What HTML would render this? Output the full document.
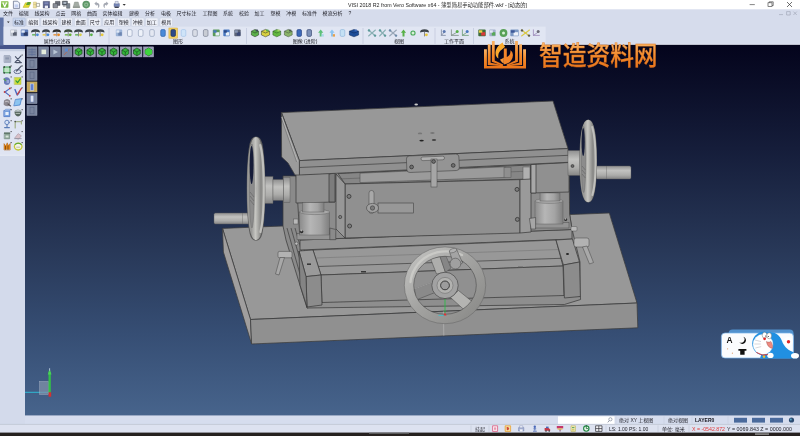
<!DOCTYPE html><html lang="zh"><head><meta charset="utf-8"><title>VISI 2018 R2</title>
<style>html,body{margin:0;padding:0;background:#d6dcec;overflow:hidden}svg{display:block}text{font-family:"Liberation Sans","Noto Sans CJK SC",sans-serif;opacity:.99}</style></head><body>
<svg width="800" height="436" viewBox="0 0 800 436">
<defs>
<linearGradient id="bg" x1="0" y1="0" x2="0" y2="1">
<stop offset="0" stop-color="#04041c"/><stop offset="0.28" stop-color="#151d3a"/><stop offset="0.555" stop-color="#283858"/><stop offset="0.78" stop-color="#364e74"/><stop offset="1" stop-color="#47648c"/></linearGradient>
<linearGradient id="cyl" x1="0" y1="0" x2="1" y2="0">
<stop offset="0" stop-color="#8c8c8c"/><stop offset="0.35" stop-color="#b6b6b6"/><stop offset="0.7" stop-color="#a4a4a4"/><stop offset="1" stop-color="#7e7e7e"/></linearGradient>
<linearGradient id="cylv" x1="0" y1="0" x2="0" y2="1">
<stop offset="0" stop-color="#909090"/><stop offset="0.35" stop-color="#c2c2c0"/><stop offset="0.7" stop-color="#adadab"/><stop offset="1" stop-color="#858585"/></linearGradient>
<linearGradient id="whl" x1="0" y1="0" x2="1" y2="0">
<stop offset="0" stop-color="#9a9a98"/><stop offset="0.45" stop-color="#c6c6c2"/><stop offset="1" stop-color="#8c8c8a"/></linearGradient>
<radialGradient id="ring" cx="0.5" cy="0.5" r="0.5">
<stop offset="0.76" stop-color="#8e8e8c"/><stop offset="0.88" stop-color="#c4c4c0"/><stop offset="1" stop-color="#90908e"/></radialGradient>
<linearGradient id="ringg" x1="0.1" y1="0.1" x2="0.9" y2="0.9">
<stop offset="0" stop-color="#bcbcba"/><stop offset="0.45" stop-color="#a4a4a2"/><stop offset="1" stop-color="#8e8e8c"/></linearGradient>
<filter id="soft" x="-5%" y="-5%" width="110%" height="110%"><feGaussianBlur stdDeviation="0.32"/></filter>
<linearGradient id="orgt" gradientUnits="userSpaceOnUse" x1="0" y1="42" x2="0" y2="68">
<stop offset="0" stop-color="#fbb868"/><stop offset="0.5" stop-color="#f48e30"/><stop offset="1" stop-color="#ea761c"/></linearGradient>
<linearGradient id="org" x1="0" y1="0" x2="0" y2="1">
<stop offset="0" stop-color="#f9b264"/><stop offset="0.5" stop-color="#f48a2a"/><stop offset="1" stop-color="#e9741a"/></linearGradient>
</defs>
<rect x="0.00" y="0.00" width="800.00" height="436.00" fill="#d6dcec" />
<rect x="0.00" y="0.00" width="800.00" height="9.30" fill="#ffffff" />
<rect x="25.00" y="44.70" width="775.00" height="371.00" fill="url(#bg)" />
<g id="model" filter="url(#soft)">
<polygon points="222.5,228.4 609.3,213.0 637.0,303.0 250.5,319.5" fill="#989898" stroke="#3c3c3c" stroke-width="0.75" stroke-linejoin="round" />
<polygon points="222.5,228.4 250.5,319.5 251.6,344.0 223.4,252.0" fill="#a09e9e" stroke="#3c3c3c" stroke-width="0.75" stroke-linejoin="round" />
<polygon points="250.5,319.5 637.0,303.0 637.8,327.8 251.6,344.0" fill="#909090" stroke="#3c3c3c" stroke-width="0.75" stroke-linejoin="round" />
<line x1="443.4" y1="311.5" x2="443.8" y2="335.6" stroke="#b4b4b4" stroke-width="0.7"/>
<polygon points="283.0,176.0 299.0,176.0 301.0,240.0 322.0,304.0 307.0,308.0 286.0,240.0 283.0,226.0" fill="#8a8a8a" stroke="#3c3c3c" stroke-width="0.75" stroke-linejoin="round" />
<line x1="287.0" y1="228.0" x2="309.0" y2="306.0" stroke="#3c3c3c" stroke-width="0.7"/>
<line x1="291.0" y1="228.0" x2="313.0" y2="305.0" stroke="#3c3c3c" stroke-width="0.7"/>
<line x1="295.0" y1="228.0" x2="317.0" y2="305.0" stroke="#3c3c3c" stroke-width="0.7"/>
<polygon points="560.0,192.0 569.0,192.0 569.6,214.0 572.0,229.0 580.0,262.0 580.0,297.0 564.0,299.0 556.0,240.0" fill="#8c8c8c" stroke="#3c3c3c" stroke-width="0.75" stroke-linejoin="round" />
<polygon points="307.0,302.0 564.0,292.0 580.4,296.5 580.6,299.5 564.4,304.5 307.0,308.0" fill="#8e8e8e" stroke="#3c3c3c" stroke-width="0.75" stroke-linejoin="round" />
<polygon points="300.0,240.0 572.0,229.5 572.0,239.0 300.0,250.0" fill="#939393" stroke="#3c3c3c" stroke-width="0.75" stroke-linejoin="round" />
<polygon points="313.0,250.0 556.0,240.0 563.0,266.0 321.0,275.0" fill="#989898" stroke="#3c3c3c" stroke-width="0.75" stroke-linejoin="round" />
<line x1="318.0" y1="266.5" x2="561.0" y2="258.3" stroke="#3c3c3c" stroke-width="0.7"/>
<line x1="316.0" y1="258.0" x2="559.0" y2="249.5" stroke="#666" stroke-width="0.4"/>
<polygon points="321.0,275.0 563.0,266.0 564.0,295.5 322.0,302.5" fill="#909090" stroke="#3c3c3c" stroke-width="0.75" stroke-linejoin="round" />
<rect x="361.00" y="271.20" width="5.00" height="1.20" fill="#222" />
<rect x="518.00" y="266.60" width="5.00" height="1.20" fill="#555" />
<polygon points="299.0,251.0 313.0,250.0 321.0,275.0 306.0,276.6" fill="#9a9a9a" stroke="#3c3c3c" stroke-width="0.75" stroke-linejoin="round" />
<polygon points="306.0,276.6 321.0,275.0 322.0,305.0 307.0,307.0" fill="#8c8c8c" stroke="#3c3c3c" stroke-width="0.75" stroke-linejoin="round" />
<polygon points="299.0,251.0 306.0,276.6 307.0,307.0 300.0,285.0" fill="#848484" stroke="#3c3c3c" stroke-width="0.75" stroke-linejoin="round" />
<rect x="307.00" y="263.50" width="4.00" height="1.30" fill="#222" />
<polygon points="556.0,240.0 572.4,239.0 579.5,262.0 563.4,265.0" fill="#9a9a9a" stroke="#3c3c3c" stroke-width="0.75" stroke-linejoin="round" />
<polygon points="563.4,265.0 579.5,262.0 580.4,296.5 564.4,298.0" fill="#8c8c8c" stroke="#3c3c3c" stroke-width="0.75" stroke-linejoin="round" />
<ellipse cx="567.5" cy="254" rx="1.5" ry="1" fill="#222"/>
<polygon points="296.0,174.0 569.0,162.0 569.6,214.0 572.0,229.5 300.0,240.0" fill="#8c8c8c" stroke="#3c3c3c" stroke-width="0.75" stroke-linejoin="round" />
<polygon points="338.0,173.5 531.0,165.0 531.0,179.0 345.0,184.0" fill="#868686" stroke="#3c3c3c" stroke-width="0.75" stroke-linejoin="round" />
<line x1="338.0" y1="179.0" x2="531.0" y2="171.0" stroke="#555" stroke-width="0.5"/>
<polygon points="360.0,173.2 505.0,166.8 505.0,177.4 360.0,182.6" fill="#9b9b9b" stroke="#444" stroke-width="0.5" stroke-linejoin="round" />
<rect x="504.00" y="167.50" width="7.00" height="10.00" fill="#8f8f8f" stroke="#555" stroke-width="0.5"/>
<rect x="523.00" y="167.00" width="7.00" height="14.00" fill="#b0b0b0" stroke="#555" stroke-width="0.5"/>
<polygon points="345.0,184.0 520.0,179.6 520.0,233.0 345.0,238.0" fill="#909090" stroke="#3c3c3c" stroke-width="0.75" stroke-linejoin="round" />
<polygon points="336.0,174.0 345.0,184.0 345.0,238.0 336.0,229.0" fill="#979797" stroke="#3c3c3c" stroke-width="0.75" stroke-linejoin="round" />
<circle cx="340.2" cy="217" r="1.6" fill="#808080" stroke="#2a2a2a" stroke-width="0.6"/>
<polygon points="520.0,179.6 531.0,179.0 531.0,232.0 520.0,233.0" fill="#9a9a9a" stroke="#3c3c3c" stroke-width="0.75" stroke-linejoin="round" />
<polygon points="296.0,174.5 335.0,173.0 335.0,202.0 296.0,203.0" fill="#909090" stroke="#3c3c3c" stroke-width="0.75" stroke-linejoin="round" />
<polygon points="329.0,174.0 335.0,173.0 335.0,202.0 329.0,202.0" fill="#7c7c7c" stroke="#3c3c3c" stroke-width="0.75" stroke-linejoin="round" />
<polygon points="531.0,164.5 569.0,162.5 569.0,192.0 531.0,193.0" fill="#909090" stroke="#3c3c3c" stroke-width="0.75" stroke-linejoin="round" />
<polygon points="531.0,164.5 536.0,164.3 536.0,193.0 531.0,193.0" fill="#a8a8a8" stroke="#3c3c3c" stroke-width="0.75" stroke-linejoin="round" />
<rect x="297.00" y="233.50" width="38.50" height="6.20" fill="#949494" stroke="#4c4c4c" stroke-width="0.5"/>
<rect x="299.80" y="212.00" width="29.80" height="23.00" fill="url(#cyl)" stroke="#555" stroke-width="0.4"/>
<ellipse cx="314.7" cy="212" rx="14.9" ry="2.6" fill="#a8a8a8" stroke="#555" stroke-width="0.4"/>
<rect x="302.50" y="202.50" width="21.50" height="9.50" fill="url(#cyl)" stroke="#555" stroke-width="0.4"/>
<rect x="293.40" y="219.00" width="4.60" height="5.00" fill="#b8b8b8" stroke="#444" stroke-width="0.4"/>
<circle cx="301.6" cy="231.6" r="1.7" fill="#2a2a2a"/>
<circle cx="301.4" cy="230.6" r="1" fill="#b0b0b0"/>
<polygon points="329.8,228.0 335.8,229.5 335.8,239.7 329.8,239.7" fill="#8a8a8a" stroke="#333" stroke-width="0.5" stroke-linejoin="round" />
<circle cx="296.4" cy="243.6" r="1.5" fill="#c0c0c0" stroke="#333" stroke-width="0.4"/>
<rect x="533.00" y="222.50" width="36.00" height="5.50" fill="#949494" stroke="#4c4c4c" stroke-width="0.5"/>
<rect x="535.00" y="201.00" width="28.00" height="23.00" fill="url(#cyl)" stroke="#555" stroke-width="0.4"/>
<ellipse cx="549" cy="201" rx="14" ry="2.4" fill="#a8a8a8" stroke="#555" stroke-width="0.4"/>
<rect x="540.00" y="193.00" width="20.00" height="8.00" fill="url(#cyl)" stroke="#555" stroke-width="0.4"/>
<polygon points="529.4,218.5 535.6,217.5 535.6,229.0 531.0,229.0" fill="#a6a6a6" stroke="#333" stroke-width="0.5" stroke-linejoin="round" />
<circle cx="565.6" cy="219.6" r="1.5" fill="#2a2a2a"/>
<circle cx="565.4" cy="218.8" r="0.9" fill="#b0b0b0"/>
<polygon points="281.6,112.6 553.0,101.0 568.0,148.6 299.4,160.6" fill="#989898" stroke="#3c3c3c" stroke-width="0.75" stroke-linejoin="round" />
<polygon points="299.4,160.6 568.0,148.6 568.6,162.3 299.4,175.0" fill="#909090" stroke="#3c3c3c" stroke-width="0.75" stroke-linejoin="round" />
<line x1="299.4" y1="167.5" x2="568.3" y2="155.3" stroke="#3c3c3c" stroke-width="0.7"/>
<polygon points="281.4,112.6 299.4,160.6 299.4,175.0 295.0,175.0 288.0,163.0 281.6,157.0" fill="#9b9b9b" stroke="#3c3c3c" stroke-width="0.75" stroke-linejoin="round" />
<line x1="281.8" y1="117.0" x2="297.6" y2="161.5" stroke="#b8b8b8" stroke-width="0.9"/>
<line x1="281.8" y1="119.5" x2="296.6" y2="162.0" stroke="#555" stroke-width="0.4"/>
<ellipse cx="420" cy="133.4" rx="2.2" ry="0.9" fill="#777"/>
<ellipse cx="432.4" cy="133" rx="2.2" ry="0.9" fill="#777"/>
<ellipse cx="421.6" cy="140.6" rx="2.2" ry="0.9" fill="#222"/>
<ellipse cx="434" cy="140" rx="2.2" ry="0.9" fill="#444"/>
<ellipse cx="416.2" cy="104.6" rx="1.8" ry="1" fill="#c8c8c8"/>
<rect x="406.6" y="155" width="52.5" height="16.5" rx="3" fill="#949494" stroke="#444" stroke-width="0.6" transform="rotate(-2.4 433 163)"/>
<rect x="421" y="156.6" width="23.5" height="3.6" rx="1.8" fill="#b0b0b0" stroke="#444" stroke-width="0.5" transform="rotate(-2.4 433 158)"/>
<rect x="431.00" y="159.00" width="6.00" height="28.00" fill="#a6a6a6" stroke="#444" stroke-width="0.5"/>
<circle cx="411.6" cy="167" r="1.9" fill="#707070" stroke="#222" stroke-width="0.6"/>
<circle cx="453.2" cy="165.4" r="1.9" fill="#707070" stroke="#222" stroke-width="0.6"/>
<circle cx="433.6" cy="161.5" r="1.9" fill="#707070" stroke="#222" stroke-width="0.6"/>
<rect x="378.00" y="203.00" width="35.60" height="10.00" fill="#989898" stroke="#444" stroke-width="0.6"/>
<rect x="369" y="190.5" width="5" height="23" rx="2.4" fill="#a8a8a8" stroke="#444" stroke-width="0.5"/>
<ellipse cx="372.5" cy="208" rx="6" ry="4.6" fill="#a0a0a0" stroke="#444" stroke-width="0.6"/>
<circle cx="372.5" cy="208" r="2.2" fill="#7a7a7a" stroke="#333" stroke-width="0.5"/>
<circle cx="349" cy="196.4" r="2" fill="#7e7e7e" stroke="#2a2a2a" stroke-width="0.7"/>
<circle cx="349.6" cy="226" r="2" fill="#7e7e7e" stroke="#2a2a2a" stroke-width="0.7"/>
<circle cx="517" cy="189.4" r="2" fill="#7e7e7e" stroke="#2a2a2a" stroke-width="0.7"/>
<circle cx="517.4" cy="219.4" r="2" fill="#7e7e7e" stroke="#2a2a2a" stroke-width="0.7"/>
<rect x="278" y="251.4" width="14" height="6.4" rx="1.5" fill="#b2b2b2" stroke="#444" stroke-width="0.5"/>
<polygon points="280.0,257.5 284.5,257.5 279.0,275.0 275.5,274.0" fill="#a8a8a8" stroke="#444" stroke-width="0.5" stroke-linejoin="round" />
<rect x="574" y="238" width="15" height="9" rx="2" fill="#b2b2b2" stroke="#444" stroke-width="0.5"/>
<polygon points="582.5,247.0 587.0,246.0 593.5,262.5 589.5,264.0" fill="#a8a8a8" stroke="#444" stroke-width="0.5" stroke-linejoin="round" />
<rect x="571" y="226.5" width="6" height="4.5" rx="1" fill="#b8b8b8" stroke="#444" stroke-width="0.4"/>
<rect x="263.00" y="176.50" width="10.00" height="27.00" fill="url(#cylv)" stroke="#555" stroke-width="0.4"/>
<rect x="273.00" y="179.50" width="10.50" height="21.00" fill="url(#cylv)" stroke="#555" stroke-width="0.4"/>
<rect x="283.50" y="177.50" width="6.50" height="25.00" fill="url(#cylv)" stroke="#555" stroke-width="0.4"/>
<rect x="214" y="213" width="39" height="11" rx="1.5" fill="url(#cylv)" stroke="#555" stroke-width="0.4"/>
<line x1="242.5" y1="213.0" x2="242.5" y2="224.0" stroke="#666" stroke-width="0.4"/>
<ellipse cx="256" cy="188.6" rx="4.5" ry="47.3" fill="#8a8a8a" stroke="#5a5a5a" stroke-width="9.6"/>
<ellipse cx="256" cy="188.6" rx="4.5" ry="47.3" fill="none" stroke="url(#whl)" stroke-width="8.8"/>
<ellipse cx="251.9" cy="186" rx="2.5" ry="42" fill="#8c8c8c" stroke="#666" stroke-width="0.4"/>
<ellipse cx="251.6" cy="165" rx="1.9" ry="19" fill="#141c38"/>
<line x1="250.0" y1="192.0" x2="254.0" y2="197.0" stroke="#5a5a5a" stroke-width="0.5"/>
<line x1="250.0" y1="196.0" x2="254.0" y2="201.0" stroke="#5a5a5a" stroke-width="0.5"/>
<line x1="250.0" y1="200.0" x2="254.0" y2="205.0" stroke="#5a5a5a" stroke-width="0.5"/>
<path d="M260.2 145 C264.8 162 265 214 260.4 232" fill="none" stroke="#d2d2ce" stroke-width="2.2" opacity="0.75" stroke-linecap="round"/>
<rect x="568.00" y="150.50" width="17.00" height="25.00" fill="url(#cylv)" stroke="#555" stroke-width="0.4"/>
<circle cx="572.5" cy="166" r="1.5" fill="#666" stroke="#222" stroke-width="0.5"/>
<rect x="596" y="166" width="35" height="13" rx="1.5" fill="url(#cylv)" stroke="#555" stroke-width="0.4"/>
<line x1="606.5" y1="166.0" x2="606.5" y2="179.0" stroke="#666" stroke-width="0.4"/>
<ellipse cx="588.2" cy="161" rx="4.2" ry="37" fill="#8a8a8a" stroke="#5a5a5a" stroke-width="9.2"/>
<ellipse cx="588.2" cy="161" rx="4.2" ry="37" fill="none" stroke="url(#whl)" stroke-width="8.4"/>
<ellipse cx="583.6" cy="159.5" rx="2.2" ry="33" fill="#8c8c8c" stroke="#666" stroke-width="0.4"/>
<ellipse cx="583.2" cy="142" rx="1.6" ry="14" fill="#141c38"/>
<line x1="582.0" y1="166.0" x2="585.4" y2="170.0" stroke="#5a5a5a" stroke-width="0.5"/>
<line x1="582.0" y1="170.0" x2="585.4" y2="174.0" stroke="#5a5a5a" stroke-width="0.5"/>
<line x1="582.0" y1="174.0" x2="585.4" y2="178.0" stroke="#5a5a5a" stroke-width="0.5"/>
<path d="M592.2 127 C596.6 142 596.8 180 592.4 195" fill="none" stroke="#d2d2ce" stroke-width="2" opacity="0.75" stroke-linecap="round"/>
<g>
<polygon points="436.5,274.0 445.5,272.5 440.0,256.5 430.5,258.5" fill="#aeaeac" stroke="#444" stroke-width="0.5" stroke-linejoin="round" />
<polygon points="445.5,272.5 440.0,256.5 446.0,256.0 451.0,268.0" fill="#868686" stroke="#444" stroke-width="0.4" stroke-linejoin="round" />
<polygon points="433.0,282.0 435.0,292.5 416.0,300.0 414.5,289.0" fill="#8a8a8a" stroke="#444" stroke-width="0.5" stroke-linejoin="round" />
<line x1="433.0" y1="282.0" x2="414.5" y2="289.0" stroke="#a6a6a6" stroke-width="0.8"/>
<polygon points="450.5,297.5 458.5,290.5 474.5,303.5 466.0,311.5" fill="#b4b4b2" stroke="#444" stroke-width="0.5" stroke-linejoin="round" />
<circle cx="445" cy="285.4" r="13.2" fill="#a2a2a2" stroke="#3a3a3a" stroke-width="0.6"/>
<circle cx="445" cy="285.4" r="8" fill="#b2b2b0" stroke="#555" stroke-width="0.4"/>
<circle cx="445" cy="285.4" r="4.4" fill="#9c9c9c" stroke="#222" stroke-width="0.8"/>
<ellipse cx="445" cy="285.3" rx="36" ry="33.7" fill="none" stroke="url(#ringg)" stroke-width="9.4"/>
<ellipse cx="445" cy="285.3" rx="40.7" ry="38.4" fill="none" stroke="#6a6a6a" stroke-width="0.6"/>
<ellipse cx="445" cy="285.3" rx="31.3" ry="29" fill="none" stroke="#4c4c4c" stroke-width="0.6"/>
<path d="M410.5 282 A35.5 33.5 0 0 1 462 255" fill="none" stroke="#d0d0cc" stroke-width="2.4" opacity="0.75" stroke-linecap="round"/>
<polygon points="449.4,251.6 456.6,249.2 462.6,263.0 455.0,267.6" fill="#a4a4a4" stroke="#444" stroke-width="0.5" stroke-linejoin="round" />
<ellipse cx="453" cy="250.6" rx="3.8" ry="2" fill="#b0b0b0" stroke="#444" stroke-width="0.4" transform="rotate(-18 453 250.6)"/>
<circle cx="455.4" cy="263.6" r="5.4" fill="#a0a0a0" stroke="#444" stroke-width="0.5"/>
</g>
<line x1="445.0" y1="299.0" x2="445.0" y2="313.0" stroke="#22c040" stroke-width="0.8"/>
<line x1="438.5" y1="315.4" x2="445.0" y2="315.4" stroke="#30c8d8" stroke-width="0.8"/>
<polygon points="443.5,315.6 446.5,315.6 445.0,312.4" fill="#e03030" stroke="none" stroke-width="0" stroke-linejoin="round" />
</g>
<line x1="25.0" y1="392.3" x2="48.4" y2="392.3" stroke="#2cc4dc" stroke-width="0.9"/>
<rect x="39.60" y="381.40" width="9.00" height="13.00" fill="#8494ac" opacity="0.7" stroke="#c4ccd8" stroke-width="0.5"/>
<rect x="48.50" y="372.00" width="2.30" height="20.60" fill="#34c048" />
<polygon points="47.8,374.6 51.5,374.6 49.6,368.6" fill="#48d058" stroke="none" stroke-width="0" stroke-linejoin="round" />
<rect x="49.20" y="368.20" width="0.90" height="2.40" fill="#b8c0e0" />
<rect x="48.60" y="392.30" width="2.60" height="4.40" fill="#d83030" />
<rect x="27.00" y="46.90" width="10.00" height="10.00" fill="#7a859f" stroke="#98a0b4" stroke-width="0.5"/>
<rect x="38.66" y="46.90" width="10.00" height="10.00" fill="#7a859f" stroke="#98a0b4" stroke-width="0.5"/>
<rect x="50.32" y="46.90" width="10.00" height="10.00" fill="#7a859f" stroke="#98a0b4" stroke-width="0.5"/>
<rect x="61.98" y="46.90" width="10.00" height="10.00" fill="#7a859f" stroke="#98a0b4" stroke-width="0.5"/>
<rect x="73.64" y="46.90" width="10.00" height="10.00" fill="#9a9eb6" stroke="#b0b4c8" stroke-width="0.5"/>
<path d="M75.2 50.0 l3.4 -2 l3.4 2 v3.8 l-3.4 2 l-3.4 -2z" fill="#34b63a" stroke="#143c18" stroke-width="0.6"/>
<path d="M75.2 50.0 l3.4 2 l3.4 -2 M78.6 52.0 v3.8" fill="none" stroke="#143c18" stroke-width="0.55"/>
<rect x="85.30" y="46.90" width="10.00" height="10.00" fill="#9a9eb6" stroke="#b0b4c8" stroke-width="0.5"/>
<path d="M86.9 50.0 l3.4 -2 l3.4 2 v3.8 l-3.4 2 l-3.4 -2z" fill="#34b63a" stroke="#143c18" stroke-width="0.6"/>
<path d="M86.9 50.0 l3.4 2 l3.4 -2 M90.3 52.0 v3.8" fill="none" stroke="#143c18" stroke-width="0.55"/>
<rect x="96.96" y="46.90" width="10.00" height="10.00" fill="#9a9eb6" stroke="#b0b4c8" stroke-width="0.5"/>
<path d="M98.6 50.0 l3.4 -2 l3.4 2 v3.8 l-3.4 2 l-3.4 -2z" fill="#34b63a" stroke="#143c18" stroke-width="0.6"/>
<path d="M98.6 50.0 l3.4 2 l3.4 -2 M102.0 52.0 v3.8" fill="none" stroke="#143c18" stroke-width="0.55"/>
<rect x="108.62" y="46.90" width="10.00" height="10.00" fill="#9a9eb6" stroke="#b0b4c8" stroke-width="0.5"/>
<path d="M110.2 50.0 l3.4 -2 l3.4 2 v3.8 l-3.4 2 l-3.4 -2z" fill="#34b63a" stroke="#143c18" stroke-width="0.6"/>
<path d="M110.2 50.0 l3.4 2 l3.4 -2 M113.6 52.0 v3.8" fill="none" stroke="#143c18" stroke-width="0.55"/>
<rect x="120.28" y="46.90" width="10.00" height="10.00" fill="#9a9eb6" stroke="#b0b4c8" stroke-width="0.5"/>
<path d="M121.9 50.0 l3.4 -2 l3.4 2 v3.8 l-3.4 2 l-3.4 -2z" fill="#34b63a" stroke="#143c18" stroke-width="0.6"/>
<path d="M121.9 50.0 l3.4 2 l3.4 -2 M125.3 52.0 v3.8" fill="none" stroke="#143c18" stroke-width="0.55"/>
<rect x="131.94" y="46.90" width="10.00" height="10.00" fill="#9a9eb6" stroke="#b0b4c8" stroke-width="0.5"/>
<path d="M133.5 50.0 l3.4 -2 l3.4 2 v3.8 l-3.4 2 l-3.4 -2z" fill="#34b63a" stroke="#143c18" stroke-width="0.6"/>
<path d="M133.5 50.0 l3.4 2 l3.4 -2 M136.9 52.0 v3.8" fill="none" stroke="#143c18" stroke-width="0.55"/>
<rect x="143.60" y="46.90" width="10.00" height="10.00" fill="#9a9eb6" stroke="#b0b4c8" stroke-width="0.5"/>
<path d="M145.2 50.0 l3.4 -2 l3.4 2 v3.8 l-3.4 2 l-3.4 -2z" fill="#34b63a" stroke="#143c18" stroke-width="0.6"/>
<path d="M145.2 50.0 l3.4 2 l3.4 -2 M148.6 52.0 v3.8" fill="none" stroke="#143c18" stroke-width="0.55"/>
<path d="M145.2 50 l3.4 -2 l3.4 2 v3.8 l-3.4 2 l-3.4 -2z" fill="#3fd43f"/>
<line x1="28.4" y1="49.6" x2="35.6" y2="49.6" stroke="#5a6a96" stroke-width="0.7"/>
<line x1="28.4" y1="52.0" x2="35.6" y2="52.0" stroke="#5a6a96" stroke-width="0.7"/>
<line x1="28.4" y1="54.4" x2="35.6" y2="54.4" stroke="#5a6a96" stroke-width="0.7"/>
<line x1="32.0" y1="48.0" x2="32.0" y2="56.0" stroke="#5a6a96" stroke-width="0.5"/>
<rect x="41.50" y="49.60" width="4.60" height="4.60" fill="#e4ecdc" />
<polygon points="53.4,49.4 58.0,52.0 53.4,54.6" fill="#b8c4d4" stroke="none" stroke-width="0" stroke-linejoin="round" />
<line x1="64.0" y1="55.0" x2="69.5" y2="49.0" stroke="#b06a58" stroke-width="0.9"/>
<rect x="65.00" y="48.60" width="3.00" height="3.00" fill="#5a8ad0" />
<rect x="27.00" y="58.70" width="10.00" height="10.00" fill="#7a859f" stroke="#98a0b4" stroke-width="0.5"/>
<rect x="30.00" y="60.50" width="4.00" height="6.60" fill="none" stroke="#5a6684" stroke-width="0.6"/>
<rect x="27.00" y="70.30" width="10.00" height="10.00" fill="#7a859f" stroke="#98a0b4" stroke-width="0.5"/>
<rect x="30.00" y="72.10" width="4.00" height="6.60" fill="none" stroke="#5a6684" stroke-width="0.6"/>
<rect x="27.00" y="81.90" width="10.00" height="10.00" fill="#c4a85c" stroke="#d8c078" stroke-width="0.5"/>
<rect x="30.20" y="83.90" width="3.60" height="6.40" fill="#5f7fd0" stroke="#dfe6ff" stroke-width="0.5"/>
<rect x="27.00" y="93.60" width="10.00" height="10.00" fill="#7a859f" stroke="#98a0b4" stroke-width="0.5"/>
<rect x="30.40" y="95.40" width="3.40" height="6.60" fill="#dfe6f4" stroke="#5f74b0" stroke-width="0.4"/>
<rect x="27.00" y="105.40" width="10.00" height="10.00" fill="#7a859f" stroke="#98a0b4" stroke-width="0.5"/>
<rect x="30.00" y="107.20" width="4.00" height="6.60" fill="none" stroke="#5a6684" stroke-width="0.6"/>
<rect x="0.00" y="45.00" width="25.00" height="4.00" fill="#45548a" />
<rect x="0.00" y="49.00" width="25.00" height="375.40" fill="#d3daeb" />
<rect x="0.00" y="49.00" width="25.00" height="106.30" fill="#dfe4f2" />
<rect x="0.00" y="49.00" width="25.00" height="2.20" fill="#c8d0e2" />
<line x1="0.0" y1="155.3" x2="25.0" y2="155.3" stroke="#f2f4fa" stroke-width="0.6"/>
<rect x="0.00" y="17.50" width="3.60" height="28.00" fill="#6074a6" />
<g id="lefticons" stroke-linecap="round" stroke-linejoin="round">
<path d="M4.4 55.6 h5.4 l1 1.2 v5.6 h-6.4z" fill="#aab2c4" stroke="#8690a8" stroke-width="0.5" />
<path d="M5.4 57.4 h3.6 v2 h-3.6z" fill="#8c96ae" stroke="none" stroke-width="0.8" />
<path d="M15 62.4 l6 -6.6 M15.4 56.6 l5 5.6 M16 62.6 h5.4" fill="none" stroke="#4c546a" stroke-width="1.1" />
<path d="M4.2 67 h5.8 v5.8 h-5.8z" fill="#bfe3c4" stroke="#3f9e52" stroke-width="1" />
<circle cx="4.2" cy="67" r="0.9" fill="#3a4a40"/>
<circle cx="10" cy="67" r="0.9" fill="#3a4a40"/>
<circle cx="4.2" cy="72.8" r="0.9" fill="#3a4a40"/>
<circle cx="10" cy="72.8" r="0.9" fill="#3a4a40"/>
<ellipse cx="17.6" cy="71.6" rx="3.6" ry="2" fill="none" stroke="#5a6488" stroke-width="0.9"/>
<path d="M16.6 71 l4.6 -4.8" fill="none" stroke="#4c546a" stroke-width="1.2" />
<path d="M4 78.2 q3 -2 5.6 0.6 q1.6 3 -0.6 5.6 q-3.2 1.4 -5 -1.2z" fill="#6a7cb8" stroke="none" stroke-width="0.8" />
<path d="M3.8 79 l2 1.6" fill="none" stroke="#58a848" stroke-width="1.1" />
<path d="M6.6 80 h2.4 v3 h-2.4z" fill="#9aa8d8" stroke="none" stroke-width="0.8" />
<path d="M14.6 77.6 h6.4 v6.8 h-6.4z" fill="#cfdc3c" stroke="#a8b830" stroke-width="0.5" />
<path d="M16 80.8 l1.6 1.8 l2.6 -3.6" fill="none" stroke="#2f9a3c" stroke-width="1.2" />
<path d="M9.6 88.6 l-4.6 3.4 l4.6 3.6" fill="none" stroke="#4a68c0" stroke-width="1.1" />
<circle cx="9.8" cy="88.4" r="0.9" fill="#c84040"/>
<circle cx="4.6" cy="92" r="0.9" fill="#c84040"/>
<circle cx="9.8" cy="95.8" r="0.9" fill="#c84040"/>
<path d="M15 89.6 l2.2 5.4 l2.2 -3" fill="none" stroke="#4a68c0" stroke-width="1.4" />
<path d="M17.4 94.4 l4 -6" fill="none" stroke="#c84848" stroke-width="1.3" />
<path d="M4 100.4 q3.4 -3 6 0 q1 3.4 -1.4 5.6 q-3.6 0.6 -5 -1.6z" fill="#8c8890" stroke="none" stroke-width="0.8" />
<path d="M5.4 101.6 q2 -1 3.4 0.4" fill="none" stroke="#c8c4c8" stroke-width="0.9" />
<path d="M8 104 l2.6 2" fill="none" stroke="#5a5458" stroke-width="1.1" />
<path d="M15.8 99.4 l5.8 -0.8 l-1.6 6.4 l-5.8 0.8z" fill="#8cc4f0" stroke="#3a78c8" stroke-width="0.7" />
<path d="M4.2 110.6 h5.6 v6 h-5.6z" fill="#7aa4e0" stroke="#3f6cc0" stroke-width="0.7" />
<path d="M5.4 112 h3.2 v3 h-3.2z" fill="#e8f0fc" stroke="none" stroke-width="0.8" />
<path d="M4.2 110.6 l1.4 -1.4 h5.4 l-1.2 1.4" fill="#a8c4ec" stroke="#3f6cc0" stroke-width="0.4" />
<path d="M14.4 111.6 h7.2 q-0.4 4.6 -3.6 5 q-3.2 -0.4 -3.6 -5z" fill="#56665e" stroke="none" stroke-width="0.8" />
<path d="M15.4 110.6 q2.6 -1.6 5.2 0" fill="none" stroke="#9aa8a0" stroke-width="0.9" />
<path d="M16 113.4 h3.6" fill="none" stroke="#c8d4cc" stroke-width="0.8" />
<circle cx="7" cy="122.4" r="2.2" fill="#d8e4f8" stroke="#5a7cb8" stroke-width="0.9"/>
<path d="M7 124.6 v2.6 M4.6 127.6 h4.8" fill="none" stroke="#5a7cb8" stroke-width="1.1" />
<path d="M15.2 128 v-6.4 h6.2 v2.4" fill="none" stroke="#a2b088" stroke-width="1.2" />
<circle cx="15.2" cy="121.6" r="0.8" fill="#4a4a4a"/>
<path d="M4.6 133.4 h5 v5.4 h-5z" fill="#8aa494" stroke="#5c7466" stroke-width="0.5" />
<path d="M4 132.4 h6.2 v1.6 h-6.2z" fill="#62786c" stroke="none" stroke-width="0.8" />
<path d="M5.6 135.4 h3 v2.2 h-3z" fill="#d8e4dc" stroke="none" stroke-width="0.8" />
<path d="M15 137.6 l3.2 -4 l3.2 2.2 l-2.6 3.2z" fill="#d8c0c8" stroke="#a08c98" stroke-width="0.5" />
<path d="M14.6 138.6 h6.6" fill="none" stroke="#8a8a98" stroke-width="0.8" />
<path d="M4 149.6 v-6 l1.8 2.4 l1.4 -3.2 l1.4 3 l1.6 -2.4 v6.2z" fill="#e88c1c" stroke="#a85c10" stroke-width="0.5" />
<path d="M5.6 146.4 v3 M8 146 v3.4" fill="none" stroke="#6a3808" stroke-width="0.8" />
<ellipse cx="18.2" cy="146.6" rx="3.8" ry="3.4" fill="#f4f4e4" stroke="#c4c838" stroke-width="1.3"/>
<path d="M15.2 144.4 q3 -2.4 6 0" fill="none" stroke="#58a838" stroke-width="1.1" />
<path d="M16.6 147.2 h3.2" fill="none" stroke="#b0b0a0" stroke-width="0.8" />
<rect x="21.6" y="54.6" width="1.1" height="0.9" fill="#222"/>
<rect x="10.6" y="65.5" width="1.1" height="0.9" fill="#222"/>
<rect x="21.6" y="65.5" width="1.1" height="0.9" fill="#222"/>
<rect x="10.6" y="76.5" width="1.1" height="0.9" fill="#222"/>
<rect x="21.6" y="76.5" width="1.1" height="0.9" fill="#222"/>
<rect x="10.6" y="87.4" width="1.1" height="0.9" fill="#222"/>
<rect x="21.6" y="87.4" width="1.1" height="0.9" fill="#222"/>
<rect x="10.6" y="98.4" width="1.1" height="0.9" fill="#222"/>
<rect x="21.6" y="98.4" width="1.1" height="0.9" fill="#222"/>
<rect x="10.6" y="109.3" width="1.1" height="0.9" fill="#222"/>
<rect x="21.6" y="109.3" width="1.1" height="0.9" fill="#222"/>
<rect x="10.6" y="120.3" width="1.1" height="0.9" fill="#222"/>
<rect x="21.6" y="120.3" width="1.1" height="0.9" fill="#222"/>
<rect x="10.6" y="131.2" width="1.1" height="0.9" fill="#222"/>
<rect x="21.6" y="131.2" width="1.1" height="0.9" fill="#222"/>
<rect x="10.6" y="142.2" width="1.1" height="0.9" fill="#222"/>
<rect x="21.6" y="142.2" width="1.1" height="0.9" fill="#222"/>
</g>
<g id="qat" stroke-linejoin="round">
<rect x="1" y="1.2" width="7.4" height="6.6" rx="0.8" fill="#7cb848"/>
<rect x="1" y="1.2" width="7.4" height="2.6" rx="0.8" fill="#a6d276" opacity="0.8"/>
<path d="M2.8 2.4 L4.7 6.8 L6.6 2.4" fill="none" stroke="#ffffff" stroke-width="1.2" />
<path d="M13.4 1.2 h4.2 l2 2 v5.2 h-6.2z" fill="#eef2fc" stroke="#5c6684" stroke-width="0.7" />
<path d="M14.6 4.4 h3.6 v3 h-3.6z" fill="#c4d0f0" stroke="none" stroke-width="0.8" />
<path d="M23 7.4 l2.4 -4.6 h5.6 l-2.4 4.6z" fill="#e4dc34" stroke="#a8a020" stroke-width="0.4" />
<path d="M26 5 l1.6 -3 h3.4 l-1.6 3z" fill="#5ea232" stroke="none" stroke-width="0.8" />
<path d="M33.4 2 h3 v6 h-3z" fill="#f0e2a4" stroke="#c8b468" stroke-width="0.4" />
<path d="M36.4 3.4 h3.2 v3 h-3.2z" fill="#fbfbf4" stroke="#6c6c5c" stroke-width="0.5" />
<path d="M33.4 4.4 h3" fill="none" stroke="#c8b468" stroke-width="0.5" />
<path d="M43.2 1.4 h6.4 v6.6 h-6.4z" fill="#545c88" stroke="#3c4468" stroke-width="0.4" />
<path d="M44.4 2.2 h4 v2.2 h-4z" fill="#7c86b4" stroke="none" stroke-width="0.8" />
<path d="M44.8 5.6 h3.2 v2.4 h-3.2z" fill="#eef0f8" stroke="none" stroke-width="0.8" />
<path d="M55.4 1.4 h4.6 v4 h-4.6z" fill="#6a6e78" stroke="#44464e" stroke-width="0.5" />
<path d="M53 3.6 h4.6 v4.2 h-4.6z" fill="#8a8e98" stroke="#44464e" stroke-width="0.5" />
<path d="M62.4 1.2 h5 v3.8 h-5z" fill="#5a626c" stroke="#3c424a" stroke-width="0.5" />
<path d="M63.4 2 h3 v2 h-3z" fill="#aab4c0" stroke="none" stroke-width="0.8" />
<path d="M66.6 3.6 h3.2 v4.6 h-3.2z" fill="#7c8690" stroke="#4a5058" stroke-width="0.5" />
<path d="M63 6 h2.6" fill="none" stroke="#4a5058" stroke-width="0.8" />
<path d="M74.6 2 h3.6 l1.6 5.6 h-6.8z" fill="#a4aca4" stroke="#848c84" stroke-width="0.4" />
<path d="M73 6.6 h6.8 v1.2 h-6.8z" fill="#8a928a" stroke="none" stroke-width="0.8" />
<circle cx="86.2" cy="4.6" r="3.8" fill="#5e9668"/>
<circle cx="86.2" cy="4.6" r="2.2" fill="#8ab890"/>
<circle cx="86.2" cy="4.6" r="0.9" fill="#5e9668"/>
<path d="M94.4 3.4 l2.2 -2 v1.4 q3.2 0.2 2.8 3.4 q-0.4 1.6 -1.6 1.8 q1 -3 -1.2 -3.2 v1.2z" fill="#a4a8b2" stroke="none" stroke-width="0.8" />
<path d="M108.4 3.4 l-2.2 -2 v1.4 q-3.2 0.2 -2.8 3.4 q0.4 1.6 1.6 1.8 q-1 -3 1.2 -3.2 v1.2z" fill="#a4a8b2" stroke="none" stroke-width="0.8" />
<path d="M114 3.6 h5.4 v3 h-5.4z" fill="#7686b8" stroke="#4c5884" stroke-width="0.4" />
<path d="M115.2 1.4 h3 v2.4 h-3z" fill="#dfe4f2" stroke="#6c7698" stroke-width="0.4" />
<path d="M114.6 6.6 h4.2 v1.4 h-4.2z" fill="#3c4254" stroke="none" stroke-width="0.8" />
</g>
<polygon points="122.6,4.0 125.8,4.0 124.2,5.8" fill="#333" stroke="none" stroke-width="0" stroke-linejoin="round" />
<text x="348.0" y="7.0" font-size="5.3" fill="#222" >VISI 2018 R2 from Vero Software x64 - 薄型简易手动功能部件.wkf - [动态的]</text>
<line x1="749.6" y1="4.6" x2="754.8" y2="4.6" stroke="#333" stroke-width="0.6"/>
<rect x="768.00" y="2.80" width="4.00" height="3.80" fill="none" stroke="#333" stroke-width="0.6"/>
<path d="M769.2 2.8 v-1 h4 v3.8 h-1.2" fill="none" stroke="#333" stroke-width="0.6"/>
<path d="M787 2 l5 5 M792 2 l-5 5" stroke="#333" stroke-width="0.7"/>
<path d="M779 14.6 h4 M786.6 11.6 h3.6 v3.4 h-3.6z M793.4 11.6 l3.4 3.4 M796.8 11.6 l-3.4 3.4" fill="none" stroke="#9aa0b0" stroke-width="0.6"/>
<text x="3.0" y="15.4" font-size="5" fill="#1c1c24" >文件</text>
<text x="18.8" y="15.4" font-size="5" fill="#1c1c24" >编辑</text>
<text x="34.6" y="15.4" font-size="5" fill="#1c1c24" >线架构</text>
<text x="55.6" y="15.4" font-size="5" fill="#1c1c24" >点云</text>
<text x="71.2" y="15.4" font-size="5" fill="#1c1c24" >网格</text>
<text x="87.0" y="15.4" font-size="5" fill="#1c1c24" >曲面</text>
<text x="102.6" y="15.4" font-size="5" fill="#1c1c24" >实体编辑</text>
<text x="129.0" y="15.4" font-size="5" fill="#1c1c24" >建模</text>
<text x="145.0" y="15.4" font-size="5" fill="#1c1c24" >分析</text>
<text x="161.0" y="15.4" font-size="5" fill="#1c1c24" >电极</text>
<text x="176.4" y="15.4" font-size="5" fill="#1c1c24" >尺寸标注</text>
<text x="202.5" y="15.4" font-size="5" fill="#1c1c24" >工程图</text>
<text x="223.0" y="15.4" font-size="5" fill="#1c1c24" >系统</text>
<text x="239.0" y="15.4" font-size="5" fill="#1c1c24" >校验</text>
<text x="254.6" y="15.4" font-size="5" fill="#1c1c24" >加工</text>
<text x="270.5" y="15.4" font-size="5" fill="#1c1c24" >塑模</text>
<text x="286.2" y="15.4" font-size="5" fill="#1c1c24" >冲模</text>
<text x="302.0" y="15.4" font-size="5" fill="#1c1c24" >标准件</text>
<text x="322.6" y="15.4" font-size="5" fill="#1c1c24" >模流分析</text>
<text x="348.6" y="15.4" font-size="5" fill="#1c1c24" >?</text>
<rect x="3.60" y="26.60" width="542.00" height="17.80" fill="#e1e6f3" />
<polygon points="7.0,21.4 9.6,21.4 8.3,23.0" fill="#222" stroke="none" stroke-width="0" stroke-linejoin="round" />
<rect x="13" y="18" width="12.2" height="8.2" rx="0.8" fill="#c9d6ee" stroke="#9aa6c4" stroke-width="0.4"/>
<text x="19.1" y="24.3" font-size="5" fill="#1c1c24" text-anchor="middle">标准</text>
<rect x="27" y="18" width="12.5" height="8.2" rx="0.8" fill="#eef1f9" stroke="#c2c9dc" stroke-width="0.4"/>
<text x="33.2" y="24.3" font-size="5" fill="#1c1c24" text-anchor="middle">编辑</text>
<rect x="41" y="18" width="17.700000000000003" height="8.2" rx="0.8" fill="#eef1f9" stroke="#c2c9dc" stroke-width="0.4"/>
<text x="49.9" y="24.3" font-size="5" fill="#1c1c24" text-anchor="middle">线架构</text>
<rect x="60.7" y="18" width="11.799999999999997" height="8.2" rx="0.8" fill="#eef1f9" stroke="#c2c9dc" stroke-width="0.4"/>
<text x="66.6" y="24.3" font-size="5" fill="#1c1c24" text-anchor="middle">建模</text>
<rect x="74.5" y="18" width="12.5" height="8.2" rx="0.8" fill="#eef1f9" stroke="#c2c9dc" stroke-width="0.4"/>
<text x="80.8" y="24.3" font-size="5" fill="#1c1c24" text-anchor="middle">曲面</text>
<rect x="88.7" y="18" width="12.299999999999997" height="8.2" rx="0.8" fill="#eef1f9" stroke="#c2c9dc" stroke-width="0.4"/>
<text x="94.8" y="24.3" font-size="5" fill="#1c1c24" text-anchor="middle">尺寸</text>
<rect x="103" y="18" width="12.5" height="8.2" rx="0.8" fill="#eef1f9" stroke="#c2c9dc" stroke-width="0.4"/>
<text x="109.2" y="24.3" font-size="5" fill="#1c1c24" text-anchor="middle">应用</text>
<rect x="117.5" y="18" width="12.5" height="8.2" rx="0.8" fill="#eef1f9" stroke="#c2c9dc" stroke-width="0.4"/>
<text x="123.8" y="24.3" font-size="5" fill="#1c1c24" text-anchor="middle">塑模</text>
<rect x="131.7" y="18" width="12.300000000000011" height="8.2" rx="0.8" fill="#eef1f9" stroke="#c2c9dc" stroke-width="0.4"/>
<text x="137.8" y="24.3" font-size="5" fill="#1c1c24" text-anchor="middle">冲模</text>
<rect x="145.7" y="18" width="12.300000000000011" height="8.2" rx="0.8" fill="#eef1f9" stroke="#c2c9dc" stroke-width="0.4"/>
<text x="151.8" y="24.3" font-size="5" fill="#1c1c24" text-anchor="middle">加工</text>
<rect x="160" y="18" width="12.5" height="8.2" rx="0.8" fill="#eef1f9" stroke="#c2c9dc" stroke-width="0.4"/>
<text x="166.2" y="24.3" font-size="5" fill="#1c1c24" text-anchor="middle">模具</text>
<rect x="10.3" y="29.6" width="6.8" height="6.6" rx="0.8" fill="#b8bec9"/>
<rect x="13.0" y="32.2" width="3.7" height="3.4" fill="#5a6070"/>
<rect x="10.9" y="30.3" width="3.1" height="2.4" fill="#eef0f6"/>
<rect x="20.8" y="29.6" width="7.4" height="6.6" rx="0.8" fill="#5a78b4"/>
<rect x="23.7" y="32.2" width="4.0" height="3.4" fill="#2c3c68"/>
<rect x="21.4" y="30.3" width="3.4" height="2.4" fill="#dfe8f8"/>
<path d="M31.0 32.4 a4.5 3.2 0 0 1 9.0 0 q-4.5 -1.2 -9.0 0z" fill="#3c444c"/>
<line x1="35.5" y1="31.6" x2="35.5" y2="36.4" stroke="#4a4a4a" stroke-width="0.6"/>
<circle cx="37.4" cy="34.8" r="1.4" fill="#4a8ad8"/>
<rect x="32.1" y="34.2" width="3" height="1.3" fill="#58b048"/>
<path d="M42.0 32.4 a4.0 3.2 0 0 1 8.0 0 q-4.0 -1.2 -8.0 0z" fill="#3c444c"/>
<line x1="46.0" y1="31.6" x2="46.0" y2="36.4" stroke="#4a4a4a" stroke-width="0.6"/>
<circle cx="47.9" cy="34.8" r="1.4" fill="#4a8ad8"/>
<rect x="42.6" y="34.2" width="3" height="1.3" fill="#e8c838"/>
<path d="M52.5 32.4 a4.2 3.2 0 0 1 8.5 0 q-4.2 -1.2 -8.5 0z" fill="#2e2e2e"/>
<line x1="56.8" y1="31.6" x2="56.8" y2="36.4" stroke="#4a4a4a" stroke-width="0.6"/>
<circle cx="58.6" cy="34.8" r="1.4" fill="#e88a28"/>
<rect x="53.4" y="34.2" width="3" height="1.3" fill="#e88a28"/>
<path d="M64.0 32.4 a4.2 3.2 0 0 1 8.5 0 q-4.2 -1.2 -8.5 0z" fill="#3c4c3c"/>
<line x1="68.2" y1="31.6" x2="68.2" y2="36.4" stroke="#4a4a4a" stroke-width="0.6"/>
<circle cx="70.2" cy="34.8" r="1.4" fill="#68b038"/>
<rect x="64.8" y="34.2" width="3" height="1.3" fill="#68b038"/>
<path d="M74.0 32.4 a4.5 3.2 0 0 1 9.0 0 q-4.5 -1.2 -9.0 0z" fill="#3c444c"/>
<line x1="78.5" y1="31.6" x2="78.5" y2="36.4" stroke="#4a4a4a" stroke-width="0.6"/>
<circle cx="80.4" cy="34.8" r="1.4" fill="#d8d048"/>
<rect x="75.1" y="34.2" width="3" height="1.3" fill="#58b048"/>
<path d="M85.0 32.4 a4.5 3.2 0 0 1 9.0 0 q-4.5 -1.2 -9.0 0z" fill="#3c444c"/>
<line x1="89.5" y1="31.6" x2="89.5" y2="36.4" stroke="#4a4a4a" stroke-width="0.6"/>
<circle cx="91.4" cy="34.8" r="1.4" fill="#58b048"/>
<path d="M96.0 32.4 a4.2 3.2 0 0 1 8.5 0 q-4.2 -1.2 -8.5 0z" fill="#3c444c"/>
<line x1="100.2" y1="31.6" x2="100.2" y2="36.4" stroke="#4a4a4a" stroke-width="0.6"/>
<circle cx="102.2" cy="34.8" r="1.4" fill="#e8c838"/>
<text x="57.0" y="43.4" font-size="5" fill="#1c1c24" text-anchor="middle">属性/过滤器</text>
<rect x="115.8" y="29.6" width="6.4" height="6.6" rx="0.8" fill="#9cb4d8"/>
<rect x="118.3" y="32.2" width="3.5" height="3.4" fill="#6d86b0"/>
<rect x="116.4" y="30.3" width="2.9" height="2.4" fill="#dfe8f6"/>
<rect x="127.5" y="29.6" width="4.6" height="6.8" rx="1.3" fill="#eef2fa" stroke="#8a98b4" stroke-width="0.6"/>
<rect x="138.4" y="29.6" width="4.6" height="6.8" rx="1.3" fill="#eef2fa" stroke="#8a98b4" stroke-width="0.6"/>
<rect x="149.7" y="29.6" width="4.6" height="6.8" rx="1.3" fill="#e4e8f2" stroke="#8a98b4" stroke-width="0.6"/>
<rect x="160.7" y="29.6" width="4.6" height="6.8" rx="1.3" fill="#4a8ad8" stroke="#2c5aa0" stroke-width="0.6"/>
<rect x="168.90" y="28.00" width="8.70" height="10.20" fill="#f2d264" stroke="#d8a838" stroke-width="0.5"/>
<rect x="170.9" y="29.6" width="4.6" height="6.8" rx="1.3" fill="#2c4a88" stroke="#1c2c58" stroke-width="0.6"/>
<rect x="181.2" y="29.6" width="4.6" height="6.8" rx="1.3" fill="#cfe4f8" stroke="#9cc0e8" stroke-width="0.6"/>
<rect x="192.7" y="29.6" width="4.6" height="6.8" rx="1.3" fill="#d8dce6" stroke="#7c8498" stroke-width="0.6"/>
<rect x="203.4" y="29.6" width="4.6" height="6.8" rx="1.3" fill="#c8ccd4" stroke="#6c7488" stroke-width="0.6"/>
<rect x="212.8" y="29.6" width="6.9" height="6.6" rx="0.8" fill="#5a9a5a"/>
<rect x="215.5" y="32.2" width="3.8" height="3.4" fill="#e8f0f8"/>
<rect x="213.4" y="30.3" width="3.1" height="2.4" fill="#4a78c0"/>
<rect x="223.3" y="29.6" width="6.4" height="6.6" rx="0.8" fill="#4a78c0"/>
<rect x="225.8" y="32.2" width="3.5" height="3.4" fill="#e8f0f8"/>
<rect x="223.9" y="30.3" width="2.9" height="2.4" fill="#2c4a88"/>
<rect x="234.3" y="29.6" width="6.4" height="6.6" rx="0.8" fill="#5c6478"/>
<rect x="236.8" y="32.2" width="3.5" height="3.4" fill="#3c4a78"/>
<rect x="234.9" y="30.3" width="2.9" height="2.4" fill="#8a98b4"/>
<text x="178.0" y="43.4" font-size="5" fill="#1c1c24" text-anchor="middle">图形</text>
<path d="M251.4 31.2 l3.6 -1.8 l3.6 1.8 v3.8 l-3.6 1.8 l-3.6 -1.8z" fill="#5ab04a" stroke="#243424" stroke-width="0.5"/>
<path d="M251.4 31.2 l3.6 1.8 l3.6 -1.8" fill="none" stroke="#243424" stroke-width="0.5"/>
<rect x="255.6" y="29.6" width="2.4" height="1.8" fill="#3c4c58"/>
<path d="M261.4 31.2 l4.1 -1.8 l4.1 1.8 v3.8 l-4.1 1.8 l-4.1 -1.8z" fill="#d8d040" stroke="#242c24" stroke-width="0.5"/>
<path d="M261.4 31.2 l4.1 1.8 l4.1 -1.8" fill="none" stroke="#242c24" stroke-width="0.5"/>
<rect x="266.1" y="29.6" width="2.4" height="1.8" fill="#58b048"/>
<path d="M272.9 31.2 l3.9 -1.8 l3.9 1.8 v3.8 l-3.9 1.8 l-3.9 -1.8z" fill="#62b840" stroke="#2c5424" stroke-width="0.5"/>
<path d="M272.9 31.2 l3.9 1.8 l3.9 -1.8" fill="none" stroke="#2c5424" stroke-width="0.5"/>
<rect x="277.4" y="29.6" width="2.4" height="1.8" fill="#a8d868"/>
<path d="M284.4 31.2 l3.9 -1.8 l3.9 1.8 v3.8 l-3.9 1.8 l-3.9 -1.8z" fill="#8ab46a" stroke="#3c4c3c" stroke-width="0.5"/>
<path d="M284.4 31.2 l3.9 1.8 l3.9 -1.8" fill="none" stroke="#3c4c3c" stroke-width="0.5"/>
<rect x="288.9" y="29.6" width="2.4" height="1.8" fill="#4c5c4c"/>
<rect x="296.9" y="29.6" width="4.6" height="6.8" rx="1.3" fill="#3c68b8" stroke="#1c3878" stroke-width="0.6"/>
<rect x="306.9" y="29.6" width="4.6" height="6.8" rx="1.3" fill="#7c90b8" stroke="#2c3c68" stroke-width="0.6"/>
<path d="M318.1 32.8 l2.6 -3.4 l2.6 3.4 h-1.6 v3.6 h-2 v-3.6z" fill="#5cc078"/>
<rect x="321.6" y="34.2" width="2.2" height="2.4" fill="#a8d8e8"/>
<path d="M329.4 32.8 l2.6 -3.4 l2.6 3.4 h-1.6 v3.6 h-2 v-3.6z" fill="#8cc4f0"/>
<rect x="332.8" y="34.2" width="2.2" height="2.4" fill="#e8a048"/>
<rect x="340.2" y="29.6" width="4.6" height="6.8" rx="1.3" fill="#c4e0f4" stroke="#88b0d8" stroke-width="0.6"/>
<path d="M349.4 31.2 l4.6 -1.8 l4.6 1.8 v3.8 l-4.6 1.8 l-4.6 -1.8z" fill="#1c4c98" stroke="#0c2858" stroke-width="0.5"/>
<path d="M349.4 31.2 l4.6 1.8 l4.6 -1.8" fill="none" stroke="#0c2858" stroke-width="0.5"/>
<rect x="354.6" y="29.6" width="2.4" height="1.8" fill="#3c68b8"/>
<text x="305.0" y="43.4" font-size="5" fill="#1c1c24" text-anchor="middle">图像 (进阶)</text>
<path d="M368.6 30.0 l6.8 6 M375.4 30.0 l-6.8 6" fill="none" stroke="#8ab0b4" stroke-width="1.1" stroke-linecap="round"/>
<circle cx="369.0" cy="30.4" r="1.2" fill="#5c9a9a"/>
<circle cx="375.0" cy="35.6" r="1.2" fill="#5c9a9a"/>
<path d="M379.6 30.0 l5.8 6 M385.4 30.0 l-5.8 6" fill="none" stroke="#8ab0b4" stroke-width="1.1" stroke-linecap="round"/>
<circle cx="380.0" cy="30.4" r="1.2" fill="#5c9a9a"/>
<circle cx="385.0" cy="35.6" r="1.2" fill="#5c9a9a"/>
<path d="M389.6 30.0 l6.8 6 M396.4 30.0 l-6.8 6" fill="none" stroke="#9aa8b8" stroke-width="1.1" stroke-linecap="round"/>
<circle cx="390.0" cy="30.4" r="1.2" fill="#6c8aa8"/>
<circle cx="396.0" cy="35.6" r="1.2" fill="#6c8aa8"/>
<path d="M400.9 32.8 l2.6 -3.4 l2.6 3.4 h-1.6 v3.6 h-2 v-3.6z" fill="#58b048"/>
<circle cx="413.0" cy="33.0" r="2.6" fill="#48a858"/>
<circle cx="413.0" cy="33.0" r="1.5" fill="#d8f0d8"/>
<path d="M420.0 32.4 a4.5 3.2 0 0 1 9.0 0 q-4.5 -1.2 -9.0 0z" fill="#3c444c"/>
<line x1="424.5" y1="31.6" x2="424.5" y2="36.4" stroke="#4a4a4a" stroke-width="0.6"/>
<circle cx="426.4" cy="34.8" r="1.4" fill="#e8c838"/>
<text x="399.0" y="43.4" font-size="5" fill="#1c1c24" text-anchor="middle">视图</text>
<path d="M441.4 29.8 v5.6 h4.0 M441.4 35.4 l3.0 -3.4" fill="none" stroke="#7c88a0" stroke-width="0.8" stroke-linecap="round"/>
<circle cx="444.2" cy="31.4" r="1.5" fill="#5c78b0"/>
<path d="M451.4 29.8 v5.6 h7.0 M451.4 35.4 l6.0 -3.4" fill="none" stroke="#7c8c84" stroke-width="0.8" stroke-linecap="round"/>
<circle cx="457.2" cy="31.4" r="1.5" fill="#58b048"/>
<path d="M462.4 29.8 v5.6 h6.0 M462.4 35.4 l5.0 -3.4" fill="none" stroke="#6c9c74" stroke-width="0.8" stroke-linecap="round"/>
<circle cx="467.2" cy="31.4" r="1.5" fill="#4a78c0"/>
<text x="454.0" y="43.4" font-size="5" fill="#1c1c24" text-anchor="middle">工作平面</text>
<rect x="478.3" y="29.6" width="7.4" height="6.6" rx="0.8" fill="#3c6c3c"/>
<rect x="481.2" y="32.2" width="4.0" height="3.4" fill="#d83838"/>
<rect x="478.9" y="30.3" width="3.4" height="2.4" fill="#e8d048"/>
<rect x="489.3" y="29.6" width="6.4" height="6.6" rx="0.8" fill="#a4b0cc"/>
<rect x="491.8" y="32.2" width="3.5" height="3.4" fill="#58a858"/>
<rect x="489.9" y="30.3" width="2.9" height="2.4" fill="#e4eaf6"/>
<circle cx="503.5" cy="33.0" r="3.9" fill="#58a058"/>
<circle cx="503.5" cy="33.0" r="1.5" fill="#d8f0d8"/>
<rect x="510.3" y="29.6" width="8.4" height="6.6" rx="0.8" fill="#7c98c4"/>
<rect x="513.6" y="32.2" width="4.5" height="3.4" fill="#eef2fa"/>
<rect x="510.9" y="30.3" width="3.8" height="2.4" fill="#3c5898"/>
<path d="M521.6 30.0 l7.8 6 M529.4 30.0 l-7.8 6" fill="none" stroke="#d8c848" stroke-width="1.1" stroke-linecap="round"/>
<circle cx="522.0" cy="30.4" r="1.2" fill="#5c5c4c"/>
<circle cx="529.0" cy="35.6" r="1.2" fill="#5c5c4c"/>
<path d="M533.4 29.8 v5.6 h6.0 M533.4 35.4 l5.0 -3.4" fill="none" stroke="#9a88b8" stroke-width="0.8" stroke-linecap="round"/>
<circle cx="538.2" cy="31.4" r="1.5" fill="#6c6c78"/>
<text x="509.5" y="43.4" font-size="5" fill="#1c1c24" text-anchor="middle">系统</text>
<line x1="109.0" y1="28.0" x2="109.0" y2="44.0" stroke="#b8c0d6" stroke-width="0.6"/>
<line x1="246.5" y1="28.0" x2="246.5" y2="44.0" stroke="#b8c0d6" stroke-width="0.6"/>
<line x1="363.0" y1="28.0" x2="363.0" y2="44.0" stroke="#b8c0d6" stroke-width="0.6"/>
<line x1="435.0" y1="28.0" x2="435.0" y2="44.0" stroke="#b8c0d6" stroke-width="0.6"/>
<line x1="473.5" y1="28.0" x2="473.5" y2="44.0" stroke="#b8c0d6" stroke-width="0.6"/>
<line x1="25.0" y1="44.4" x2="800.0" y2="44.4" stroke="#eef1f8" stroke-width="0.5"/>
<rect x="25.00" y="415.60" width="775.00" height="9.00" fill="#d6ddee" />
<rect x="0.00" y="424.40" width="800.00" height="8.20" fill="#dde2f0" />
<line x1="0.0" y1="424.4" x2="800.0" y2="424.4" stroke="#b6bcc8" stroke-width="0.6"/>
<rect x="558.00" y="416.40" width="56.50" height="7.40" fill="#ffffff" />
<circle cx="610.4" cy="419.3" r="1.6" fill="none" stroke="#6a7488" stroke-width="0.6"/>
<line x1="609.2" y1="420.6" x2="607.8" y2="422.4" stroke="#6a7488" stroke-width="0.7"/>
<text x="619.0" y="422.2" font-size="5" fill="#1c1c24" >绝对 XY 上视图</text>
<text x="668.0" y="422.2" font-size="5" fill="#1c1c24" >绝对视图</text>
<text x="695.0" y="422.2" font-size="5" fill="#101018" font-weight="bold">LAYER0</text>
<rect x="734.00" y="417.80" width="13.00" height="4.80" fill="#4a6a9c" />
<rect x="752.00" y="417.80" width="13.00" height="4.80" fill="#4a6a9c" />
<rect x="770.00" y="417.80" width="13.00" height="4.80" fill="#4a6a9c" />
<circle cx="791.5" cy="420" r="2.6" fill="#2c4a70"/>
<circle cx="790.8" cy="419.4" r="1" fill="#58a8c8"/>
<text x="475.0" y="430.8" font-size="5" fill="#1c1c24" >挂起</text>
<g id="sbicons">
<path d="M492.6 425.8 h5 v5.6 h-5z" fill="#fbeef2" stroke="#dc6a8c" stroke-width="0.9" />
<path d="M494 427.4 h2.2 v2.4 h-2.2z" fill="#e898b0" stroke="none" stroke-width="0.8" />
<path d="M505.2 425.8 h5.4 v5.6 h-5.4z" fill="#f6e2a8" stroke="#e8a030" stroke-width="0.8" />
<path d="M506.6 427 q2.4 -0.6 2.6 1.8 q-0.6 1.8 -2.4 1.2z" fill="#d04838" stroke="none" stroke-width="0.8" />
<path d="M518.6 427.6 h5.2 v3.4 h-5.2z" fill="#aab4d4" stroke="#6c7cac" stroke-width="0.5" />
<path d="M519.6 425.8 h3.2 v2 h-3.2z" fill="#f2f4fa" stroke="#6c7cac" stroke-width="0.4" />
<path d="M519.8 429.4 h2.8 v2 h-2.8z" fill="#f6f6fa" stroke="none" stroke-width="0.8" />
<circle cx="534.8" cy="426.8" r="1.2" fill="#4a68b8"/>
<path d="M534.8 428 v2.6 M533 431.2 h3.8 M533.4 428.8 h2.8" fill="none" stroke="#4a68b8" stroke-width="0.8" />
<path d="M544.6 428 h4 l1.6 1.4 v1.4 h-5.6z" fill="#c43848" stroke="none" stroke-width="0.8" />
<path d="M546 426.6 h2.6 v1.6 h-2.6z" fill="#4a68b8" stroke="none" stroke-width="0.8" />
<circle cx="546" cy="431" r="0.8" fill="#333"/><circle cx="549.2" cy="431" r="0.8" fill="#333"/>
<path d="M556.8 426 h6.4 v2.4 h-6.4z" fill="#c4386c" stroke="none" stroke-width="0.8" />
<path d="M557.6 428.4 h4.8 v1.2 h-4.8z" fill="#e8b848" stroke="none" stroke-width="0.8" />
<path d="M559.6 429.6 h0.9 v2 h-0.9z" fill="#7a3a5a" stroke="none" stroke-width="0.8" />
<path d="M571 425.8 h4.4 v5.6 h-4.4z" fill="#f2eeb8" stroke="#b8b050" stroke-width="0.6" />
<path d="M572 427 h2.4 v1.2 h-2.4z" fill="#6aa868" stroke="none" stroke-width="0.8" />
<path d="M572 429.2 h2.4 v1.2 h-2.4z" fill="#c8c060" stroke="none" stroke-width="0.8" />
<circle cx="586.3" cy="428.6" r="2.7" fill="#eaf6ec" stroke="#248a44" stroke-width="1.1"/>
<path d="M586.3 425 v3.6 h2" fill="none" stroke="#1c6a34" stroke-width="0.8" />
<path d="M595.6 425.8 h6.4 v5.6 h-6.4z M598.8 425.8 v5.6 M595.6 428.6 h6.4" fill="#f4f4f8" stroke="#2c2c34" stroke-width="0.7" />
</g>
<text x="609.0" y="430.8" font-size="5" fill="#1c1c24" >LS: 1.00 PS: 1.00</text>
<text x="662.0" y="430.8" font-size="5" fill="#1c1c24" >单位: 毫米</text>
<text x="692.0" y="430.8" font-size="5" fill="#e03838" textLength="33" lengthAdjust="spacingAndGlyphs">X = -0542.872</text>
<text x="727.0" y="430.8" font-size="5" fill="#1c1c24" textLength="65" lengthAdjust="spacingAndGlyphs">Y = 0069.843 Z = 0000.000</text>
<line x1="471.0" y1="425.4" x2="471.0" y2="432.0" stroke="#b8c0d2" stroke-width="0.5"/>
<line x1="489.0" y1="425.4" x2="489.0" y2="432.0" stroke="#b8c0d2" stroke-width="0.5"/>
<line x1="606.0" y1="425.4" x2="606.0" y2="432.0" stroke="#b8c0d2" stroke-width="0.5"/>
<line x1="658.0" y1="425.4" x2="658.0" y2="432.0" stroke="#b8c0d2" stroke-width="0.5"/>
<line x1="689.0" y1="425.4" x2="689.0" y2="432.0" stroke="#b8c0d2" stroke-width="0.5"/>
<line x1="616.0" y1="416.4" x2="616.0" y2="424.0" stroke="#c2c9da" stroke-width="0.5"/>
<line x1="664.0" y1="416.4" x2="664.0" y2="424.0" stroke="#c2c9da" stroke-width="0.5"/>
<line x1="692.0" y1="416.4" x2="692.0" y2="424.0" stroke="#c2c9da" stroke-width="0.5"/>
<line x1="728.0" y1="416.4" x2="728.0" y2="424.0" stroke="#c2c9da" stroke-width="0.5"/>
<rect x="0.00" y="432.60" width="800.00" height="3.40" fill="#26211f" />
<rect x="369.00" y="432.80" width="40.00" height="1.20" fill="#5a5a5a" />
<rect x="755.00" y="433.40" width="14.00" height="1.40" fill="#c8c8c8" opacity="0.7"/>
<g id="logo" fill="url(#org)">
<path d="M484 49.2 h2.9 v16.9 h36.2 v-16.9 h2.9 v19.2 h-42z"/>
<path d="M487.8 44.3 h2.8 v18.4 l12 2.4 v1.2 l-14.8 -1.4z"/>
<path d="M491.9 41 h2.8 v19.6 l8.4 4 v1.4 l-11.2 -4.2z"/>
<path d="M522 44.3 h-2.8 v18.4 l-12 2.4 v1.2 l14.8 -1.4z"/>
<path d="M517.9 41 h-2.8 v19.6 l-8.4 4 v1.4 l11.2 -4.2z"/>
<path d="M502.8 42.6 C498 45 495.2 49.5 495.6 54 C495.8 56.2 497 57.8 498.4 58.4 C497.8 55 498.8 52.4 500.6 50.6 C502.4 48.8 504.6 47.6 505 46.4 C504 45.6 503 44.4 502.8 42.6z" fill="#f9a92e"/>
<path d="M503.8 48.4 L506.8 48.4 L506.8 57 C509 56.4 510.8 53.6 510.4 50.2 C512.2 51.4 513 53.2 512.9 55.4 C512.6 60.4 509 63.8 503.8 64.4z" fill="#f2852a"/>
<path d="M500 59.6 C501 61.6 502.4 63 503.8 63.6 L503.8 57.6 C502.6 58.6 501.2 59.4 500 59.6z" fill="#f6973a"/>
</g>
<text x="539" y="64.9" font-size="25.6" font-weight="500" fill="url(#orgt)" stroke="#dc6c18" stroke-width="0.35" textLength="118.6" lengthAdjust="spacingAndGlyphs">智造资料网</text>
<g id="ime">
<rect x="728.6" y="329.6" width="65" height="27" rx="4" fill="#5aa2e4" opacity="0.8"/>
<rect x="721.4" y="333" width="72" height="25" rx="3.6" fill="#fbfcfe" stroke="#7ab4ec" stroke-width="0.7"/>
<circle cx="764" cy="343.6" r="11.8" fill="#2190e2"/>
<path d="M768 332.4 C775 331.6 779.6 335 782 341 C783.6 345.4 787 349.6 792 351.6 C795 353 796.6 355.6 797 358.4 L760 358.4 Z" fill="#2190e2"/>
<ellipse cx="763" cy="344.4" rx="10" ry="10.2" fill="#ffffff" stroke="#c8d8e8" stroke-width="0.3"/>
<ellipse cx="764.6" cy="335.2" rx="2.4" ry="3" fill="#fff" stroke="#555" stroke-width="0.4"/>
<ellipse cx="769.2" cy="335.8" rx="2.4" ry="3" fill="#fff" stroke="#555" stroke-width="0.4"/>
<circle cx="764.6" cy="338.8" r="1.4" fill="#e02828"/>
<circle cx="765.6" cy="336" r="0.5" fill="#222"/><circle cx="768.4" cy="336.4" r="0.5" fill="#222"/>
<path d="M766.4 341.4 C766.8 345 769 348 772.4 348.4 C773 345.8 772.2 343 770.8 341.4 C769.6 342.4 767.8 342.2 766.4 341.4z" fill="#ee8a80" stroke="#7a3a3a" stroke-width="0.3"/>
<path d="M755 340 l6 1.6 M754.4 344 h6.4 M755.4 348 l5.8 -1.4" fill="none" stroke="#8a8a9a" stroke-width="0.35"/>
<circle cx="788.3" cy="341.6" r="4.6" fill="#fff"/>
<circle cx="788.5" cy="341.8" r="1.7" fill="#e02828"/>
<ellipse cx="770.4" cy="355.4" rx="3.2" ry="2.6" fill="#fff"/>
<ellipse cx="795" cy="355.8" rx="4" ry="2.8" fill="#fff"/>
<circle cx="764" cy="356.6" r="1.3" fill="#f0c030"/>
<path d="M756.4 352.4 Q762 356.4 768 354.6" fill="none" stroke="#d83030" stroke-width="0.9"/>
<text x="726.4" y="343.2" font-size="8.4" fill="#111" font-weight="bold">A</text>
<path d="M743.2 336.8 a3.6 3.6 0 1 1 -4 5.2 a2.6 2.6 0 0 0 4 -5.2z" fill="#111"/>
<path d="M738.4 349 h8 v1.8 h-1.8 v4 h-4.4 v-4 h-1.8z" fill="#111"/>
<circle cx="727.6" cy="348.8" r="0.6" fill="#e0a070"/>
<circle cx="732.4" cy="353.2" r="0.6" fill="#e0a070"/>
</g>
</svg></body></html>
